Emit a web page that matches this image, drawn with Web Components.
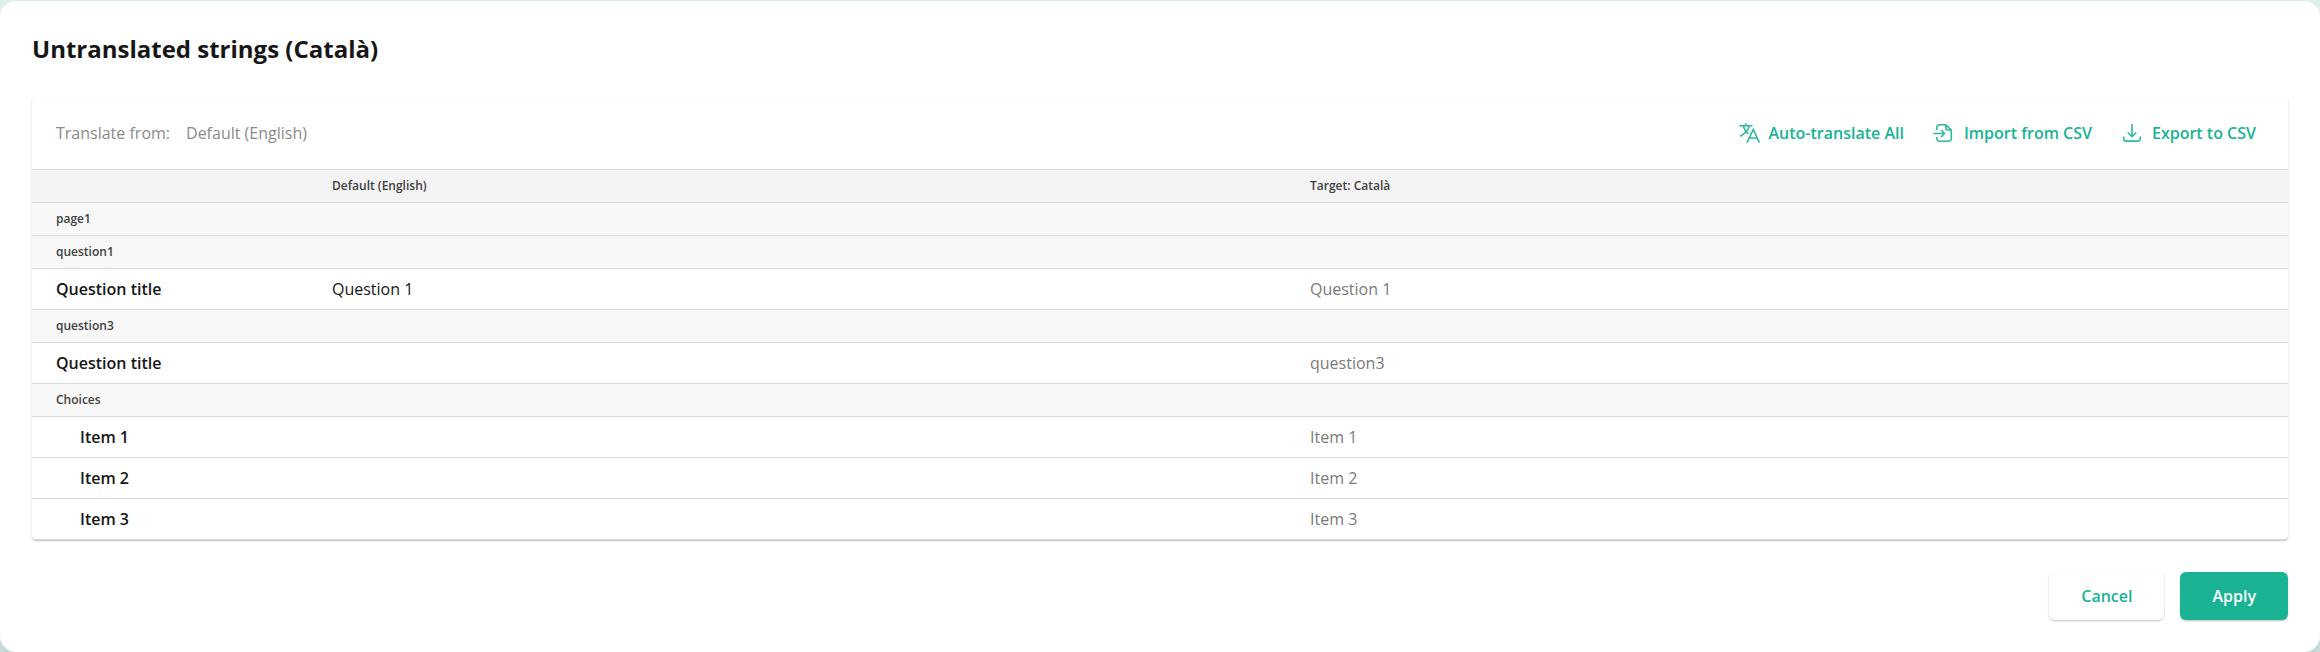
<!DOCTYPE html>
<html lang="en">
<head>
<meta charset="utf-8">
<title>Untranslated strings</title>
<style>
html,body{margin:0;height:100%}
body{font-family:"Open Sans",sans-serif;background:linear-gradient(180deg,#deefed 0%,#c5dcdb 100%);overflow:hidden}
</style>
</head>
<body>
<translation-dialog heading="Untranslated strings (Català)">
  <translation-card>
    <source-picker slot="source" label="Translate from:">Default (English)</source-picker>
    <tool-action slot="action" icon="translate">Auto-translate All</tool-action>
    <tool-action slot="action" icon="import">Import from CSV</tool-action>
    <tool-action slot="action" icon="export">Export to CSV</tool-action>
    <string-row kind="head"><span slot="source">Default (English)</span><span slot="target">Target: Català</span></string-row>
    <string-row kind="group">page1</string-row>
    <string-row kind="group">question1</string-row>
    <string-row>Question title<span slot="source">Question 1</span><span slot="target">Question 1</span></string-row>
    <string-row kind="group">question3</string-row>
    <string-row>Question title<span slot="target">question3</span></string-row>
    <string-row kind="group">Choices</string-row>
    <string-row indent>Item 1<span slot="target">Item 1</span></string-row>
    <string-row indent>Item 2<span slot="target">Item 2</span></string-row>
    <string-row indent>Item 3<span slot="target">Item 3</span></string-row>
  </translation-card>
  <dialog-button slot="footer">Cancel</dialog-button>
  <dialog-button slot="footer" primary>Apply</dialog-button>
</translation-dialog>
<script>
const define = (name, render) => customElements.define(name, class extends HTMLElement {
  constructor() {
    super();
    this.attachShadow({mode: 'open'}).innerHTML = render(this);
  }
});

define('translation-dialog', el => `<style>
:host{display:flex;flex-direction:column;box-sizing:border-box;height:calc(100vh - 1px);margin-top:1px;padding:32px;border-radius:16px;background:#fff}
h1{margin:0 0 32px;font-size:24px;line-height:32px;font-weight:700;color:#161616}
footer{display:flex;justify-content:flex-end;gap:16px;margin-top:auto}
</style><h1>${el.getAttribute('heading')}</h1><slot></slot><footer><slot name="footer"></slot></footer>`);

define('translation-card', () => `<style>
:host{display:block;border-radius:4px;box-shadow:0 1px 2px rgba(0,0,0,.25);overflow:hidden;background:#fff;border-bottom:1px solid #d6d6d6}
header{display:flex;align-items:center;justify-content:space-between;height:72px;padding:0 32px 0 24px;box-sizing:border-box}
nav{display:flex;gap:28px}
</style><header><slot name="source"></slot><nav><slot name="action"></slot></nav></header><slot></slot>`);

define('source-picker', el => `<style>
:host{display:flex;gap:16px;font-size:16px;line-height:24px;color:#8a8a8a}
</style><span>${el.getAttribute('label')}</span><span><slot></slot></span>`);

const icons = {
  translate: '<path d="M2.300 4.700h13.200M8.800 2.300v2.400M12.300 5C11 9.500 7.500 13 3 15.300M6.300 5.200c1 3.300 2.800 5.800 5 7.600M10 21.600l6.300-13.300 6 13.300M12.300 17h8"/>',
  import: '<path d="M4.900 9V6.200a2.500 2.500 0 0 1 2.500-2.500h6.400l5.500 5.500v8.500a2.500 2.500 0 0 1-2.500 2.500H7.400a2.500 2.500 0 0 1-2.500-2.500V16M13.800 3.700V7a2 2 0 0 0 2 2h3.500M1.300 12.500h11M9 9l3.500 3.500L9 16"/>',
  export: '<path d="M12 3v12.500M7.700 11.500 12 15.700l4.300-4.200M3.700 15.500v2.200a2.400 2.400 0 0 0 2.400 2.400h11.800a2.400 2.400 0 0 0 2.400-2.400v-2.200"/>'
};
define('tool-action', el => `<style>
:host{display:flex;align-items:center;gap:8px;font-size:16px;line-height:24px;font-weight:600;color:#19b394}
svg{width:24px;height:24px;fill:none;stroke:currentColor;stroke-width:1.600;opacity:.9}
</style><svg viewBox="0 0 24 24">${icons[el.getAttribute('icon')]}</svg><span><slot></slot></span>`);

define('string-row', () => `<style>
:host{display:grid;grid-template-columns:276px 978px 1fr;align-items:center;height:40px;border-top:1px solid #d9d9d9;font-size:16px;line-height:24px;color:#161616}
:host([kind]){height:32px;font-size:12px;line-height:16px;color:#404040;background:#f8f8f8}
:host([kind=head]){background:#f3f3f3}
div{padding-left:24px}
.name{font-weight:600}
:host([kind=head]) div{font-weight:600}
:host([indent]) .name{padding-left:48px}
.target{color:#7a7a7a}
:host([kind]) .target{color:inherit}
</style><div class="name"><slot></slot></div><div><slot name="source"></slot></div><div class="target"><slot name="target"></slot></div>`);

define('dialog-button', () => `<style>
:host{display:block;padding:12px 32px;font-size:16px;line-height:24px;font-weight:600;color:#19b394;background:#fff;border-radius:6px;box-shadow:0 1px 2px rgba(0,0,0,.25)}
:host([primary]){color:#fff;background:#19b394}
</style><slot></slot>`);
</script>
</body>
</html>
